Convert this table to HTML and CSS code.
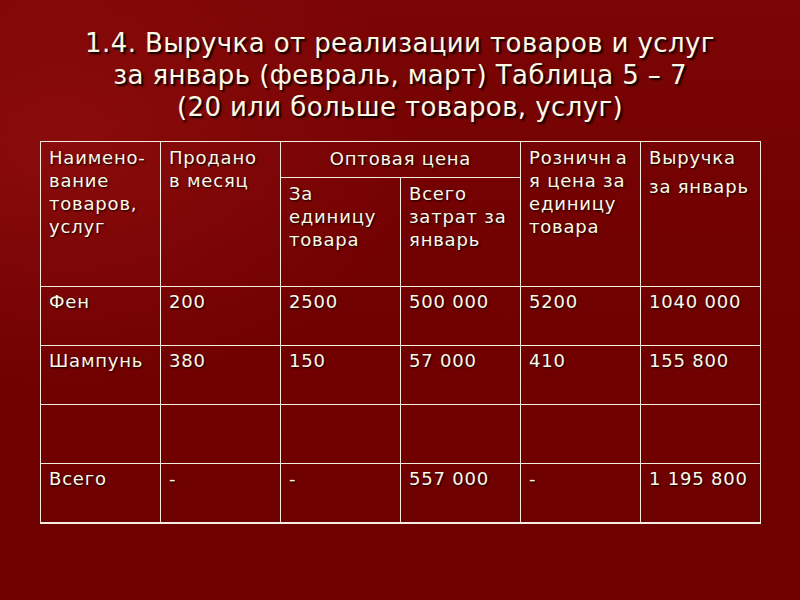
FILE: index.html
```html
<!DOCTYPE html>
<html lang="ru">
<head>
<meta charset="utf-8">
<link rel="stylesheet" href="styles.css">
</head>
<body>
<div class="slide">
  <h1 class="title">1.4. Выручка от реализации товаров и услуг<br>за январь (февраль, март) Таблица 5 – 7<br>(20 или больше товаров, услуг)</h1>
  <table class="grid">
    <colgroup><col><col><col><col><col><col></colgroup>
    <tr class="head1">
      <td rowspan="2">Наимено-<br>вание<br>товаров,<br>услуг</td>
      <td rowspan="2">Продано<br>в месяц</td>
      <td colspan="2" class="center">Оптовая цена</td>
      <td rowspan="2">Розничн<span class="gap"> </span>а<br>я цена за<br>единицу<br>товара</td>
      <td rowspan="2" class="tall">Выручка<br>за январь</td>
    </tr>
    <tr class="head2">
      <td>За<br>единицу<br>товара</td>
      <td>Всего<br>затрат за<br>январь</td>
    </tr>
    <tr class="row">
      <td>Фен</td><td>200</td><td>2500</td><td>500 000</td><td>5200</td><td>1040 000</td>
    </tr>
    <tr class="row">
      <td>Шампунь</td><td>380</td><td>150</td><td>57 000</td><td>410</td><td>155 800</td>
    </tr>
    <tr class="row">
      <td></td><td></td><td></td><td></td><td></td><td></td>
    </tr>
    <tr class="row last">
      <td>Всего</td><td>-</td><td>-</td><td>557 000</td><td>-</td><td>1 195 800</td>
    </tr>
  </table>
</div>
</body>
</html>
```
FILE: styles.css
```css
html, body {
  margin: 0;
  padding: 0;
}
body {
  width: 800px;
  height: 600px;
  overflow: hidden;
}
.slide {
  width: 800px;
  height: 600px;
  box-sizing: border-box;
  padding-top: 27px;
  background:
    radial-gradient(ellipse 520px 340px at 60px 150px, rgba(160, 20, 20, 0.5), rgba(160, 20, 20, 0) 70%),
    linear-gradient(180deg, #7c0505 0%, #720101 40%, #6e0000 100%);
  font-family: "DejaVu Sans", "Liberation Sans", sans-serif;
  color: #fdf8e6;
}
.title {
  margin: 0;
  font-weight: normal;
  font-size: 26px;
  line-height: 32px;
  text-align: center;
  letter-spacing: 0.4px;
  text-shadow: 2px 2px 2px rgba(0, 0, 0, 0.95);
}
.grid {
  margin: 18px 0 0 40px;
  border-collapse: collapse;
  table-layout: fixed;
  width: 721px;
  font-size: 18px;
  line-height: 23px;
  letter-spacing: 0.8px;
  text-shadow: 1px 1px 2px rgba(0, 0, 0, 0.95);
}
.grid col {
  width: 120px;
}
.grid td {
  border: 1px solid #f4ece0;
  padding: 4px 8px 0 8px;
  vertical-align: top;
  white-space: nowrap;
  overflow: hidden;
}
.gap {
  letter-spacing: -2px;
}
.head1 td {
  height: 30px;
}
.head1 .center {
  text-align: center;
  padding-top: 5px;
}
.head1 .tall {
  line-height: 29px;
  padding-top: 1px;
}
.head2 td {
  height: 104px;
}
.row td {
  height: 55px;
  padding-top: 3px;
}
.last td {
  border-bottom: 2px solid #f4ece0;
}
```
